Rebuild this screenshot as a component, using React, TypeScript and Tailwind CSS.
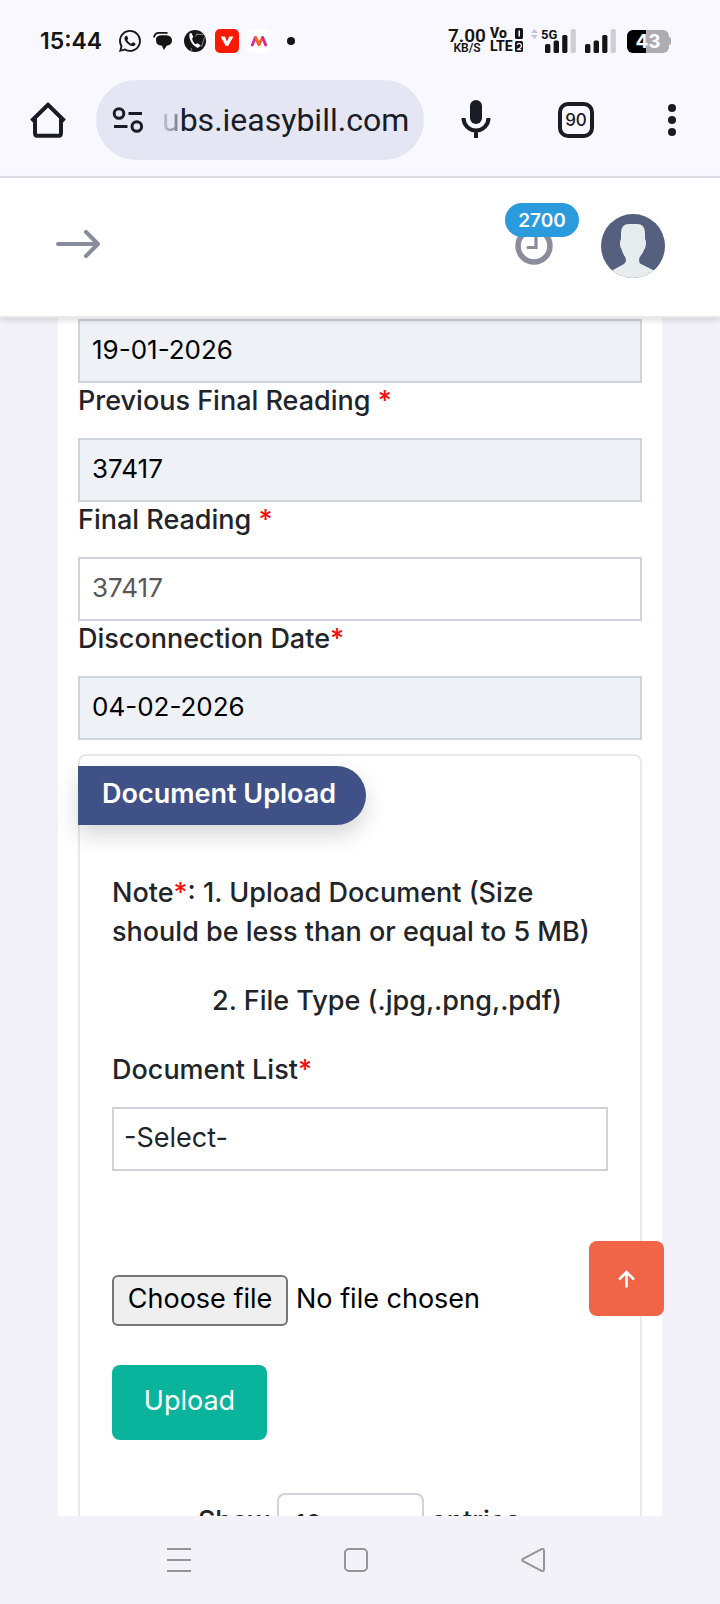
import { useState } from "react";
import { BsWhatsapp } from "react-icons/bs";

const ink = "#191b25";

function SignalBars() {
  return (
    <svg width="31" height="24" viewBox="0 0 31 24" aria-hidden="true">
      <rect x="0" y="15" width="5.4" height="9" rx="1.5" fill="#151515" />
      <rect x="8.6" y="11.6" width="5.4" height="12.4" rx="1.5" fill="#151515" />
      <rect x="17.2" y="6" width="5.2" height="18" rx="1.5" fill="#151515" />
      <rect x="25.6" y="0" width="5.2" height="24" rx="1.5" fill="#cfccd3" />
    </svg>
  );
}

function StatusBar() {
  return (
    <div className="flex h-20 items-end justify-between pr-[49px] pl-10 pb-[27px] text-[#151515]">
      <div className="flex h-6 items-center">
        <span className="w-[79px] text-[23px] leading-6 font-semibold">15:44</span>
        <BsWhatsapp className="size-[22px]" />
        <svg className="ml-3" width="20" height="20" viewBox="0 0 20 20" aria-hidden="true">
          <path d="M3 7.500Q4 4.500 8 4.300H13Q19 4.800 19 9.500Q19 13.800 13.800 14.700L10.800 19 9 14.800Q3 14.200 3 9.500Z" fill="#151515" />
          <path d="M.9 6.500Q1.800 1.800 6 1.800H14.500" fill="none" stroke="#151515" strokeWidth="1.800" />
        </svg>
        <svg className="ml-[11px]" width="22" height="22" viewBox="0 0 22 22" aria-hidden="true">
          <circle cx="11" cy="11" r="11" fill="#151515" />
          <path d="M5.500 3.500C4.600 8.500 7.500 15.300 13.800 18L16.800 15.600 13.500 13.200 11.500 14.300C9.500 12.800 8.300 10.600 8.200 8.500L9.300 7 7.500 3Z" fill="#f9f8ff" />
          <path d="M11.500 6.500 13 3.500M12.500 4.200 19 4.500M20.500 7.200 17.500 17M7.800 17.800 6.800 21" stroke="#8a898e" strokeWidth="1" fill="none" />
        </svg>
        <svg className="ml-[9px]" width="24" height="24" viewBox="0 0 24 24" aria-hidden="true">
          <rect width="24" height="24" rx="5" fill="#fb1a05" />
          <path d="M5.500 7.500 10.800 17H13L18.500 7.500H14.200L12 12.800 10 7.500Z" fill="#fff" />
        </svg>
        <svg className="ml-2" width="24" height="24" viewBox="0 0 24 24" aria-hidden="true">
          <rect width="24" height="24" rx="5" fill="#fff" />
          <path d="M5.300 16 8.300 8.500 12 15.500" fill="none" stroke="#d62aa0" strokeWidth="2.800" strokeLinecap="round" strokeLinejoin="round" />
          <path d="M8.800 8.500 12 15.500 15.500 8.500" fill="none" stroke="#f26a21" strokeWidth="2.800" strokeLinecap="round" strokeLinejoin="round" />
          <path d="M15.700 8.500 18.700 16" fill="none" stroke="#e0218a" strokeWidth="2.800" strokeLinecap="round" />
        </svg>
        <span className="ml-4 size-2 rounded-full bg-[#151515]" />
      </div>
      <div className="flex h-6 items-end">
        <div className="flex w-[42px] flex-col items-center font-[Roboto] font-semibold">
          <span className="text-[19px] leading-[15px]">7.00</span>
          <span className="text-[12px] leading-[10px]">KB/S</span>
        </div>
        <div className="ml-[2px] flex w-[33px] flex-col font-[Roboto] text-[14px] leading-[13px] font-extrabold">
          <div className="flex items-center justify-between">
            <span>Vo</span>
            <svg width="8" height="11" viewBox="0 0 8 11" aria-hidden="true">
              <rect width="8" height="11" rx="1.500" fill="#151515" />
              <path d="M4.200 2.500V8.500" stroke="#fff" strokeWidth="1.500" />
            </svg>
          </div>
          <div className="flex items-center justify-between">
            <span>LTE</span>
            <svg width="8" height="11" viewBox="0 0 8 11" aria-hidden="true">
              <rect width="8" height="11" rx="1.500" fill="#151515" />
              <path d="M2 3.800Q4 1 6 3.500T2 8.700H6.200" fill="none" stroke="#fff" strokeWidth="1.300" />
            </svg>
          </div>
        </div>
        <svg className="mb-[14px] ml-2" width="7" height="10" viewBox="0 0 7 10" aria-hidden="true">
          <path d="M0 4 3.500 0 7 4ZM0 6 3.500 10 7 6Z" fill="#c7c5cb" />
        </svg>
        <span className="mb-3 ml-[3px] w-4 font-[Roboto] text-[13px] leading-3 font-bold">5G</span>
        <div className="-ml-3">
          <SignalBars />
        </div>
        <div className="ml-[9px]">
          <SignalBars />
        </div>
        <div className="relative ml-[11px] h-[23px] w-[42px] overflow-hidden rounded-md bg-[#aeacb1]">
          <div className="absolute inset-y-0 left-0 w-[45%] bg-black" />
          <span className="relative block text-center text-[19px] leading-[23px] font-bold text-white">43</span>
        </div>
        <span className="mb-2 h-2 w-[2px] rounded-r bg-[#aeacb1]" />
      </div>
    </div>
  );
}

function BrowserBar() {
  return (
    <div className="flex h-[98px] items-start border-b-2 border-[#e2e2ec] pl-7 pr-11 text-[#191b25]">
      <button type="button" aria-label="Home" className="mt-5 flex h-10 w-10 items-center">
        <svg width="40" height="40" viewBox="0 0 40 40" fill="none" stroke={ink} strokeWidth="4">
          <path d="M8 18V32.500Q8 35.800 10 35.800H32Q34 35.800 34 32.500V18" transform="translate(-1 0)" />
          <path d="M3.500 21 20 4.800 36.500 21" />
        </svg>
      </button>
      <div className="ml-7 flex h-20 min-w-0 flex-1 items-center overflow-hidden rounded-full bg-[#e4e6f3] pl-4 pr-3">
        <svg className="shrink-0" width="32" height="26" viewBox="0 0 32 26" fill="none" stroke={ink} strokeWidth="3">
          <circle cx="7" cy="6.500" r="4.800" />
          <path d="M16.500 6.500H30M2 19.500H15.500" />
          <circle cx="24.800" cy="19.500" r="4.800" />
        </svg>
        <span className="ml-[18px] font-[Roboto] text-[32px] leading-10">
          <span className="bg-linear-to-r from-[#c6c8d3] to-[#777984] bg-clip-text text-transparent">u</span>bs.ieasybill.com
        </span>
      </div>
      <button type="button" aria-label="Voice search" className="mt-5 ml-[36px]">
        <svg width="32" height="40" viewBox="0 0 32 40">
          <rect x="10" y="0" width="12" height="24" rx="6" fill={ink} />
          <path d="M3.500 18A12.500 12.500 0 0 0 28.500 18M16 30V38" fill="none" stroke={ink} strokeWidth="4" />
        </svg>
      </button>
      <button type="button" aria-label="Tabs" className="mt-[22px] ml-[66px] flex size-9 shrink-0 items-center justify-center rounded-[10px] border-4 border-[#191b25] text-[17px] leading-5 font-medium">
        90
      </button>
      <button type="button" aria-label="More" className="mt-6 ml-[74px] flex h-8 w-2 flex-col items-center justify-between">
        <span className="size-2 shrink-0 rounded-full bg-[#191b25]" />
        <span className="size-2 shrink-0 rounded-full bg-[#191b25]" />
        <span className="size-2 shrink-0 rounded-full bg-[#191b25]" />
      </button>
    </div>
  );
}

function SiteHeader() {
  return (
    <header className="relative z-10 flex h-[140px] shrink-0 items-center justify-between border-b-2 border-[#e8eaea] bg-white pr-[55px] pb-[2px] pl-14 shadow-[0_2px_6px_rgba(0,0,0,0.15)]">
      <button type="button" aria-label="Open menu" className="-mt-1">
        <svg width="44" height="28" viewBox="0 0 44 28" fill="none" stroke="#888b9b" strokeWidth="4" strokeLinecap="round" strokeLinejoin="round">
          <path d="M2 14H42M30 2 42 14 30 26" />
        </svg>
      </button>
      <div className="flex items-center">
        <button type="button" aria-label="Session timer" className="relative mr-12">
          <svg width="38" height="38" viewBox="0 0 38 38" fill="none" stroke="#8a8c9c">
            <circle cx="19" cy="19" r="16" strokeWidth="5.500" />
            <path d="M21 8V20.500H13" strokeWidth="3.200" strokeLinecap="round" />
          </svg>
          <span className="absolute -top-6 -left-[10px] flex h-[34px] w-[74px] items-center justify-center rounded-full bg-[#2a9bdc] text-[19px] leading-none font-semibold text-white">
            2700
          </span>
        </button>
        <a href="#profile" aria-label="Profile">
          <svg width="64" height="64" viewBox="0 0 64 64">
            <defs>
              <clipPath id="avatar">
                <circle cx="32" cy="32" r="32" />
              </clipPath>
            </defs>
            <g clipPath="url(#avatar)">
              <rect width="64" height="64" fill="#555f7e" />
              <path d="M20 19Q20 10 28 10H36Q44 10 44 19V25Q45.500 27 44.800 31Q44.500 34 43.500 35Q42 39 39.500 42Q38 44 38 46Q38 49 40 50L52 56 64 64H0L12 56 23 50Q25 48.500 25 46Q25 44 23.500 42Q21.500 39 20.500 35Q18.500 32 19 29Q19 26 20 25Z" fill="#e7edec" />
            </g>
          </svg>
        </a>
      </div>
    </header>
  );
}

const Star = () => <span className="text-[#f50f0f]">*</span>;

const fieldBox = "block h-16 w-full border-2 border-[#ced2d9] px-3 pb-1 text-[26px] text-black";

export default function App() {
  const [finalReading, setFinalReading] = useState("");
  const [fileName, setFileName] = useState("No file chosen");

  return (
    <div className="flex h-screen flex-col overflow-hidden bg-[#f3f2f9] font-[Inter,'Noto_Sans',sans-serif] text-[27px] text-[#212429]">
      <div className="shrink-0 bg-[#f9f8ff]">
        <StatusBar />
        <BrowserBar />
      </div>
      <SiteHeader />

      <div className="relative flex min-h-0 flex-1 flex-col">
        <main className="mx-[58px] min-h-0 flex-1 overflow-hidden bg-white px-5 pt-px">
          <input aria-label="Previous reading date" readOnly value="19-01-2026" className={`${fieldBox} bg-[#eef1f6]`} />
          <label htmlFor="prev" className="mb-5 block leading-[35px] font-medium">
            Previous Final Reading <Star />
          </label>
          <input id="prev" readOnly value="37417" className={`${fieldBox} bg-[#eef1f6]`} />
          <label htmlFor="final" className="mb-5 block leading-[35px] font-medium">
            Final Reading <Star />
          </label>
          <input
            id="final"
            placeholder="37417"
            value={finalReading}
            onChange={(e) => setFinalReading(e.target.value)}
            className={`${fieldBox} bg-white placeholder:text-[#585858]`}
          />
          <label htmlFor="disc" className="mb-5 block leading-[35px] font-medium">
            Disconnection Date<Star />
          </label>
          <input id="disc" readOnly value="04-02-2026" className={`${fieldBox} bg-[#eef1f6]`} />

          <section className="mt-[14px] rounded-t-lg border-2 border-b-0 border-[#e9e9ea] px-8 pt-[10px]">
            <h2 className="-ml-[34px] flex h-[59px] w-72 items-center rounded-r-full bg-[#405188] pb-[2px] pl-6 font-semibold whitespace-nowrap text-white shadow-[0_10px_22px_rgba(0,0,0,0.16)]">
              Document Upload
            </h2>
            <p className="mt-12 leading-[39px] font-medium">
              Note<Star />: 1. Upload Document (Size should be less than or equal to 5 MB)
            </p>
            <p className="mt-[30px] pl-[100px] leading-[39px] font-medium whitespace-nowrap">2. File Type (.jpg,.png,.pdf)</p>
            <label htmlFor="doclist" className="mt-[30px] block leading-[39px] font-medium">
              Document List<Star />
            </label>
            <select id="doclist" className="mt-[18px] block h-16 w-full appearance-none border-2 border-[#ced2d9] bg-white px-[10px] pb-[2px]">
              <option>-Select-</option>
            </select>

            <div className="mt-[104px] flex items-center text-black">
              <input
                id="file"
                type="file"
                className="sr-only"
                onChange={(e) => setFileName(e.target.files?.[0]?.name ?? "No file chosen")}
              />
              <label htmlFor="file" className="flex h-[51px] w-44 items-center justify-center rounded-md border-2 border-[#767676] bg-[#efefef] pb-[2px] whitespace-nowrap">
                Choose file
              </label>
              <span className="ml-2 pb-[2px]">{fileName}</span>
            </div>
            <button type="button" className="mt-[39px] flex h-[75px] w-[155px] items-center justify-center rounded-lg bg-[#0ab39c] pb-[2px] text-white">
              Upload
            </button>

            <label className="mt-[53px] flex h-16 items-center justify-center gap-[7px] pr-[2px] font-medium">
              <span className="pb-2">Show</span>
              <select className="h-16 w-[147px] appearance-none rounded-lg border-2 border-[#ced2d9] bg-white px-4 pb-1 text-[26px] font-normal">
                <option>10</option>
              </select>
              <span className="pb-2">entries</span>
            </label>
          </section>
        </main>
        <button type="button" aria-label="Back to top" className="absolute right-14 bottom-[200px] flex size-[75px] items-center justify-center rounded-lg bg-[#f06548]">
          <svg width="17" height="18" viewBox="0 0 17 18" fill="none" stroke="#fff" strokeWidth="2.500">
            <path d="M8.500 17.500V2M1 9.500 8.500 2 16 9.500" />
          </svg>
        </button>
      </div>

      <nav className="flex h-[88px] shrink-0 items-center justify-center gap-[153px] pr-2">
        <button type="button" aria-label="Recent apps">
          <svg width="24" height="24" viewBox="0 0 24 24" stroke="#969499" strokeWidth="2">
            <path d="M0 1H24M0 12H24M0 23H24" />
          </svg>
        </button>
        <button type="button" aria-label="Go home">
          <svg width="24" height="24" viewBox="0 0 24 24" fill="none" stroke="#969499" strokeWidth="2">
            <rect x="1" y="1" width="22" height="22" rx="4" />
          </svg>
        </button>
        <button type="button" aria-label="Go back">
          <svg width="24" height="24" viewBox="0 0 24 24" fill="none" stroke="#969499" strokeWidth="2" strokeLinejoin="round">
            <path d="M2 10.800 20 1.300Q23 0 23 3V21Q23 24 20 22.700L2 13.200Q0 12 2 10.800Z" />
          </svg>
        </button>
      </nav>
    </div>
  );
}
